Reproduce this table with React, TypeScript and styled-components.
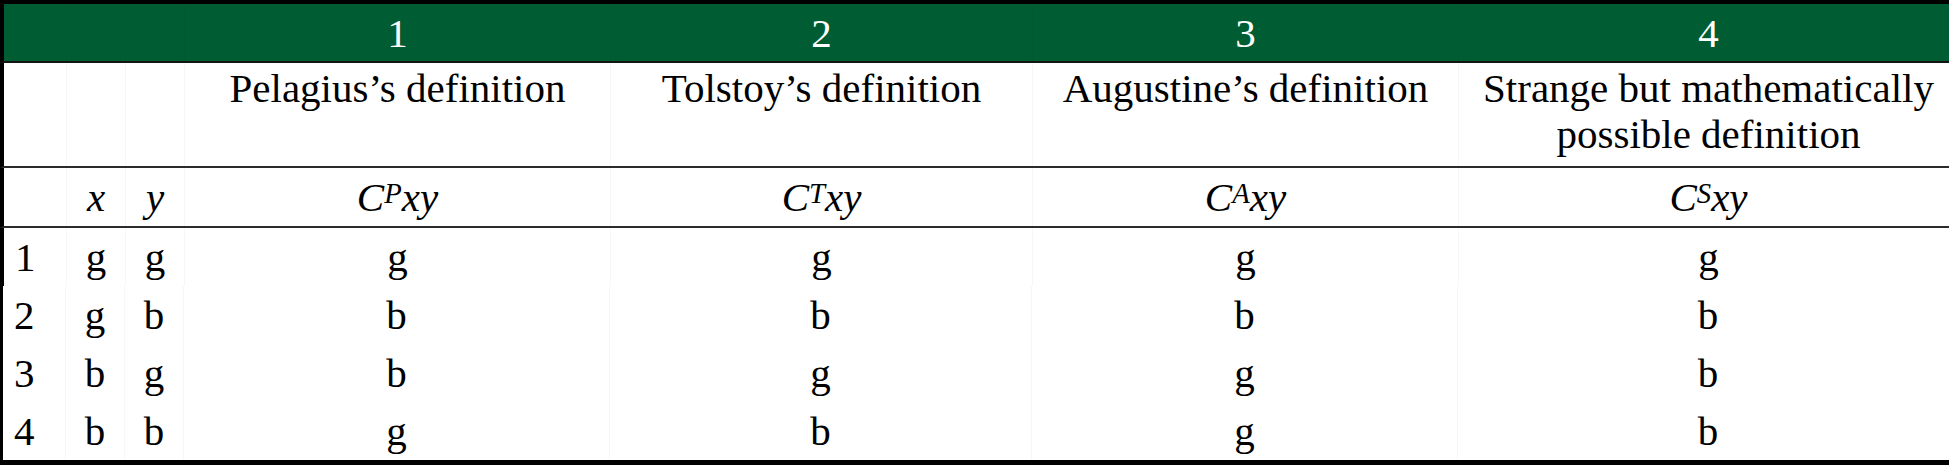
import styled, { createGlobalStyle } from "styled-components";

const GlobalStyle = createGlobalStyle`
  html, body {
    margin: 0;
    padding: 0;
    background: #ffffff;
    overflow: hidden;
  }
`;

const COLUMNS = "62px 59px 59px 426px 422px 426px 1fr";

const definitions = [
  { num: "1", label: ["Pelagius’s definition"], sup: "P" },
  { num: "2", label: ["Tolstoy’s definition"], sup: "T" },
  { num: "3", label: ["Augustine’s definition"], sup: "A" },
  { num: "4", label: ["Strange but mathematically", "possible definition"], sup: "S" },
];

const rows = [
  { n: "1", x: "g", y: "g", values: ["g", "g", "g", "g"] },
  { n: "2", x: "g", y: "b", values: ["b", "b", "b", "b"] },
  { n: "3", x: "b", y: "g", values: ["b", "g", "g", "b"] },
  { n: "4", x: "b", y: "b", values: ["g", "b", "g", "b"] },
];

const App = (): JSX.Element => {
  return (
    <>
      <GlobalStyle />
      <Table>
        <Row $height={57} $bg="#005c32" $rule="2px solid #141414">
          <Cell />
          <Cell />
          <Cell />
          {definitions.map((d) => (
            <Cell key={d.num} $light>
              {d.num}
            </Cell>
          ))}
        </Row>
        <Row $height={103} $rule="2px solid #2b2b2b" $align="start">
          <Cell />
          <Cell />
          <Cell />
          {definitions.map((d) => (
            <HeadCell key={d.num}>
              {d.label.map((line) => (
                <div key={line}>{line}</div>
              ))}
            </HeadCell>
          ))}
        </Row>
        <Row $height={58} $rule="2px solid #2b2b2b">
          <Cell />
          <Cell>
            <Var>x</Var>
          </Cell>
          <Cell>
            <Var>y</Var>
          </Cell>
          {definitions.map((d) => (
            <Cell key={d.num}>
              <Var>
                C<Sup>{d.sup}</Sup>xy
              </Var>
            </Cell>
          ))}
        </Row>
        {rows.map((r) => (
          <Row key={r.n} $height={58} $leftRule={r.n === "1" ? 4 : 3}>
            <NumCell>{r.n}</NumCell>
            <Cell>{r.x}</Cell>
            <Cell>{r.y}</Cell>
            {r.values.map((v, i) => (
              <Cell key={i}>{v}</Cell>
            ))}
          </Row>
        ))}
      </Table>
    </>
  );
};

const Table = styled.div`
  width: 1958px;
  border-top: 4px solid #000;
  border-bottom: 5px solid #000;
  font-family: "Liberation Serif", "Times New Roman", serif;
  font-size: 41px;
  line-height: 46px;
  color: #000;
`;

const Row = styled.div<{
  $height: number;
  $bg?: string;
  $rule?: string;
  $align?: string;
  $leftRule?: number;
}>`
  display: grid;
  grid-template-columns: ${COLUMNS};
  height: ${(p) => p.$height}px;
  background: ${(p) => p.$bg || "#ffffff"};
  border-bottom: ${(p) => p.$rule || "none"};
  border-left: ${(p) => p.$leftRule ?? 4}px solid #000;
  box-sizing: content-box;
  align-items: ${(p) => p.$align || "center"};
`;

const Cell = styled.div<{ $light?: boolean }>`
  height: 100%;
  display: flex;
  align-items: center;
  justify-content: center;
  color: ${(p) => (p.$light ? "#ffffff" : "#000000")};
  border-left: 1px solid rgba(0, 0, 0, 0.03);

  &:first-child {
    border-left: none;
  }
`;

const HeadCell = styled.div`
  height: 100%;
  padding-top: 2px;
  box-sizing: border-box;
  text-align: center;
  border-left: 1px solid rgba(0, 0, 0, 0.03);
`;

const NumCell = styled(Cell)`
  justify-content: flex-start;
  padding-left: 11px;
`;

const Var = styled.span`
  font-style: italic;
  white-space: nowrap;
`;

const Sup = styled.span`
  font-size: 0.7em;
  vertical-align: 8px;
  line-height: 0;
`;

export default App;
